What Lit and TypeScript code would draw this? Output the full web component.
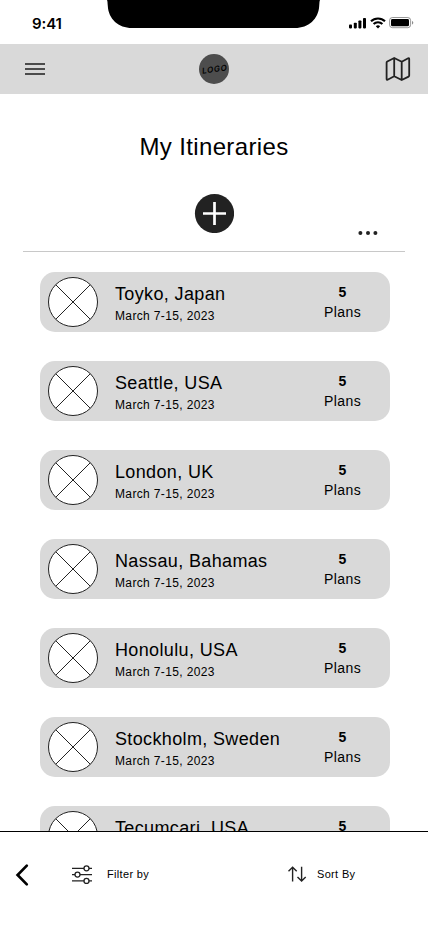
import { LitElement, html, css } from "lit";
import { customElement, property } from "lit/decorators.js";

@customElement("status-bar")
class StatusBar extends LitElement {
  static styles = css`
    :host { display: flex; position: relative; height: 44px; justify-content: space-between; background: #fff; }
    .time { font: 600 15px/18px Inter, sans-serif; letter-spacing: -0.1px; margin: 15px 0 0 32px; color: #000; }
    .notch { position: absolute; left: 107px; top: 0; }
    .signals { margin: 16px 14px 0 0; }
    svg { display: block; }
  `;
  render() {
    return html`
      <div class="time">9:41</div>
      <svg class="notch" width="213" height="28" viewBox="0 0 213 28">
        <path d="M0 0H213C212.400 1 212.500 3 212.200 6C211.500 19 201.500 28 188 28H25C11.500 28 1.500 19 .8 6C.5 3 .6 1 0 0Z" />
      </svg>
      <svg class="signals" width="65" height="14" viewBox="0 0 65 14">
        <rect x="0" y="8.600" width="3" height="3.800" rx=".8" />
        <rect x="4.800" y="6.800" width="3" height="5.600" rx=".8" />
        <rect x="9.400" y="4.400" width="3" height="8" rx=".8" />
        <rect x="14" y="2" width="3" height="10.400" rx=".8" />
        <g fill="none" stroke="#000" stroke-width="2.100">
          <path d="M22 5.300A10 10 0 0 1 36 5.300" />
          <path d="M24.600 8.100A6.200 6.200 0 0 1 33.400 8.100" />
        </g>
        <path d="M29 12.500L26.800 10.300A3.100 3.100 0 0 1 31.200 10.300Z" />
        <rect x="40.600" y="1.500" width="21" height="10.200" rx="2.800" fill="none" stroke="#000" stroke-opacity=".4" />
        <rect x="42" y="3" width="18" height="7.300" rx="1.400" />
        <path d="M63 5v3.600c.8-.3 1.300-1 1.300-1.800s-.5-1.500-1.300-1.800z" fill-opacity=".45" />
      </svg>
    `;
  }
}

@customElement("top-nav")
class TopNav extends LitElement {
  static styles = css`
    :host { display: grid; grid-template-columns: 1fr 30px 1fr; height: 50px; box-sizing: border-box; padding: 0 17px 0 17px; align-items: center; background: #d9d9d9; }
    svg { display: block; }
    .menu { margin-left: 8px; }
    .map { justify-self: end; }
    .logo { width: 30px; height: 30px; border-radius: 50%; background: #4d4d4d; display: flex; align-items: center; justify-content: center; }
    .word { font: italic 600 8px/10px Inter, sans-serif; letter-spacing: 0.7px; margin-left: 1px; color: #000; transform: rotate(-8deg); }
  `;
  render() {
    return html`
      <svg class="menu" width="20" height="14" viewBox="0 0 20 14">
        <path d="M0 2H20M0 7H20M0 12H20" stroke="#4b4b4b" stroke-width="1.900" />
      </svg>
      <div class="logo"><span class="word">LOGO</span></div>
      <svg class="map" width="27" height="26" viewBox="0 0 27 26" fill="none" stroke="#222" stroke-width="1.800" stroke-linejoin="round">
        <path d="M3.300 5.500L10.200 2L17.700 5.800L24.200 2.300Q25.200 1.900 25.200 3V19.600Q25.200 20.300 24.600 20.600L17.700 24L10.200 20.300L3.600 23.700Q2.600 24.100 2.600 23V6.600Q2.600 5.900 3.300 5.500ZM10.200 2V20.300M17.700 5.800V24" />
      </svg>
    `;
  }
}

@customElement("itinerary-card")
class ItineraryCard extends LitElement {
  @property() place = "";
  @property() dates = "";
  @property({ type: Number }) plans = 0;

  static styles = css`
    :host { display: flex; flex: none; height: 60px; box-sizing: border-box; padding: 0 28px 0 8px; border-radius: 15px; background: #d9d9d9; color: #000; }
    .thumb { display: block; margin-top: 5px; }
    .info { flex: 1; margin: 11px 0 0 17px; white-space: nowrap; }
    .place { font-size: 18px; line-height: 22px; letter-spacing: 0.36px; }
    .dates { font-size: 12px; line-height: 16px; letter-spacing: 0.36px; margin-top: 3px; }
    .count { width: 39px; margin-top: 10px; text-align: center; font-size: 14px; line-height: 20px; letter-spacing: 0.42px; }
    .number { font-weight: 700; }
  `;
  render() {
    return html`
      <svg class="thumb" width="50" height="50" viewBox="0 0 50 50" stroke="#222">
        <circle cx="25" cy="25" r="24.500" fill="#fff" />
        <path d="M7.700 7.700L42.300 42.300M42.300 7.700L7.700 42.300" />
      </svg>
      <div class="info">
        <div class="place">${this.place}</div>
        <div class="dates">${this.dates}</div>
      </div>
      <div class="count"><div class="number">${this.plans}</div><div>Plans</div></div>
    `;
  }
}

@customElement("bottom-bar")
class BottomBar extends LitElement {
  static styles = css`
    :host { display: flex; flex: none; height: 95px; box-sizing: border-box; border-top: 1px solid #000; background: #fff; padding: 29px 0 0 15px; font-size: 11px; line-height: 26px; letter-spacing: 0.33px; color: #000; }
    svg { display: block; }
    .back { margin-top: 1px; }
    .action { display: flex; align-items: center; height: 26px; }
    .filter { margin-left: 43px; gap: 14px; width: 216px; }
    .sort { gap: 10px; }
  `;
  render() {
    return html`
      <svg class="back" width="14" height="26" viewBox="0 0 14 26" fill="none" stroke="#000" stroke-width="2.700" stroke-linecap="round">
        <path d="M11.800 3.600L2.600 13L11.800 22.400" />
      </svg>
      <div class="action filter">
        <svg width="21" height="26" viewBox="0 0 21 26" fill="none" stroke="#222" stroke-width="1.300">
          <path d="M0 7.300H12M17 7.300H20M0 13.600H3M8 13.600H20M0 19.900H12M17 19.900H20" />
          <circle cx="14.500" cy="7.300" r="2.500" /><circle cx="5.500" cy="13.600" r="2.500" /><circle cx="14.500" cy="19.900" r="2.500" />
        </svg>
        <span>Filter by</span>
      </div>
      <div class="action sort">
        <svg width="19" height="26" viewBox="0 0 19 26" fill="none" stroke="#222" stroke-width="1.400">
          <path d="M4.600 20.500V6.300M.5 10.300L4.600 6.200L8.700 10.300M13.600 5.800V20M9.500 16L13.600 20.100L17.700 16" />
        </svg>
        <span>Sort By</span>
      </div>
    `;
  }
}

@customElement("app-root")
class AppRoot extends LitElement {
  static styles = css`
    :host { display: flex; flex-direction: column; width: 428px; height: 926px; overflow: hidden; background: #fff; font-family: "Liberation Sans", Arial, sans-serif; color: #000; }
    status-bar, top-nav, header { flex: none; }
    header { display: flex; flex-direction: column; align-items: center; height: 158px; box-sizing: border-box; margin: 0 23px; padding-top: 38px; border-bottom: 1px solid #c8c8c8; }
    h1 { margin: 0; font-weight: 400; font-size: 24px; line-height: 30px; letter-spacing: 0.36px; }
    .add { display: block; margin-top: 31px; }
    .more { display: block; align-self: flex-end; margin: -3px 26px 0 0; }
    .list { flex: 1; min-height: 0; overflow: hidden; display: flex; flex-direction: column; gap: 29px; padding: 20px 38px 0 40px; }
  `;
  places = ["Toyko, Japan", "Seattle, USA", "London, UK", "Nassau, Bahamas", "Honolulu, USA", "Stockholm, Sweden", "Tecumcari, USA"];
  render() {
    return html`
      <status-bar></status-bar>
      <top-nav></top-nav>
      <header>
        <h1>My Itineraries</h1>
        <svg class="add" width="40" height="40" viewBox="0 0 40 40">
          <circle cx="20.500" cy="20.500" r="19.600" fill="#222" />
          <path d="M20.500 9V32M9 20.500H32" stroke="#fff" stroke-width="2.700" />
        </svg>
        <svg class="more" width="22" height="6" viewBox="0 0 22 6" fill="#222">
          <circle cx="3.400" cy="3" r="2" /><circle cx="11" cy="3" r="2" /><circle cx="18.400" cy="3" r="2" />
        </svg>
      </header>
      <div class="list">
        ${this.places.map((p) => html`<itinerary-card .place=${p} .dates=${"March 7-15, 2023"} .plans=${5}></itinerary-card>`)}
      </div>
      <bottom-bar></bottom-bar>
    `;
  }
}
